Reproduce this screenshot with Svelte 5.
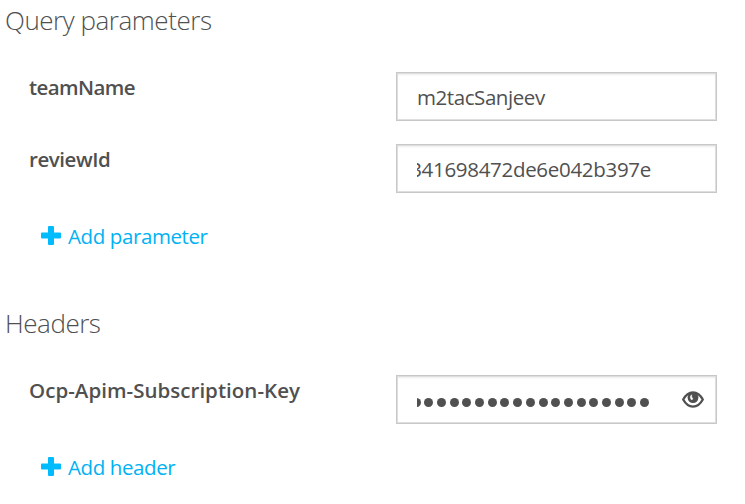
<script>
  const sections = [
    {
      title: 'Query parameters', kind: 'query', add: 'Add parameter',
      rows: [
        { name: 'teamName', cls: 'team', value: 'm2tacSanjeev' },
        { name: 'reviewId', cls: 'review', value: '341698472de6e042b397e' }
      ]
    },
    {
      title: 'Headers', kind: 'headers', add: 'Add header',
      rows: [{ name: 'Ocp-Apim-Subscription-Key', cls: 'key', secret: true }]
    }
  ];
  const dots = Array(19);
</script>

<main>
  {#each sections as s}
    <section class={s.kind}>
      <h2><span>{s.title}</span></h2>
      {#each s.rows as r}
        <div class="row">
          <div class="label {r.cls}">{r.name}</div>
          <div class="field">
            {#if r.secret}
              <div class="value mask">{#each dots as _}<i></i>{/each}</div>
              <svg class="eye" viewBox="0 0 22 17" width="22" height="17">
                <path d="M1.2 8.5Q5 1.3 11 1.3T20.8 8.5Q17 15.6 11 15.6T1.2 8.5Z" fill="none" stroke="#505050" stroke-width="2.3" stroke-linejoin="round" />
                <circle cx="11" cy="6.6" r="5.4" fill="#505050" />
                <path d="M9.6 3.8Q7.2 5.6 9.2 8.6Q10.6 9 10.8 7.8Q9.2 6 9.6 3.8Z" fill="#fff" stroke="#fff" stroke-width=".5" />
              </svg>
            {:else}
              <div class="value {r.cls}"><span>{r.value}</span></div>
            {/if}
          </div>
        </div>
      {/each}
      <a class="add" href="#add">
        <svg viewBox="0 0 20 19" width="20" height="19"><path d="M8 0h4q1 0 1 1v5.5h6q1 0 1 1v4q0 1-1 1h-6V18q0 1-1 1H8q-1 0-1-1v-5.5H1q-1 0-1-1v-4q0-1 1-1h6V1q0-1 1-1Z" fill="#00bcff" /></svg>
        <span>{s.add}</span>
      </a>
    </section>
  {/each}
</main>

<style>
  :global(body) { background: #fff; }
  main {
    box-sizing: border-box;
    width: 745px;
    height: 504px;
    overflow: hidden;
    font-family: "Segoe UI", "Open Sans", "Noto Sans", sans-serif;
    color: #505050;
    white-space: nowrap;
  }
  section { height: 303px; }
  h2 {
    margin: 0;
    padding-left: 5px;
    height: 72px;
    font-size: 26px;
    line-height: 41px;
    font-weight: 300;
    letter-spacing: -0.46px;
  }
  .row { display: flex; height: 72px; padding-left: 29px; }
  .label {
    width: 367px;
    font-size: 20.5px;
    line-height: 31px;
    font-weight: 600;
    letter-spacing: -0.6px;
  }
  .label.review { letter-spacing: -0.45px; }
  .label.key { letter-spacing: 0.03px; }
  .field {
    box-sizing: border-box;
    display: flex;
    align-items: center;
    width: 321px;
    height: 49px;
    padding-left: 20px;
    border: 1px solid #c8c8c8;
    box-shadow: inset 0 0 0 1px #dedede, inset 0 2px 2px rgba(0, 0, 0, 0.08);
  }
  .value {
    display: flex;
    justify-content: flex-end;
    width: 234px;
    overflow: hidden;
    font-size: 20.5px;
    line-height: 45px;
    padding-top: 2px;
    letter-spacing: -0.3px;
  }
  .value.team { justify-content: flex-start; letter-spacing: -0.43px; }
  .value.mask { box-sizing: border-box; gap: 3.7px; padding: 5px 2px 0 0; }
  .mask i { flex: none; width: 9px; height: 9px; border-radius: 50%; background: #505050; }
  .eye { margin-left: 31px; }
  .add {
    display: flex;
    align-items: center;
    gap: 7px;
    height: 38px;
    padding-left: 41px;
    color: #00b2f4;
    font-size: 20.5px;
    letter-spacing: -0.4px;
    text-decoration: none;
  }
  .add span { padding-top: 2px; }
</style>
